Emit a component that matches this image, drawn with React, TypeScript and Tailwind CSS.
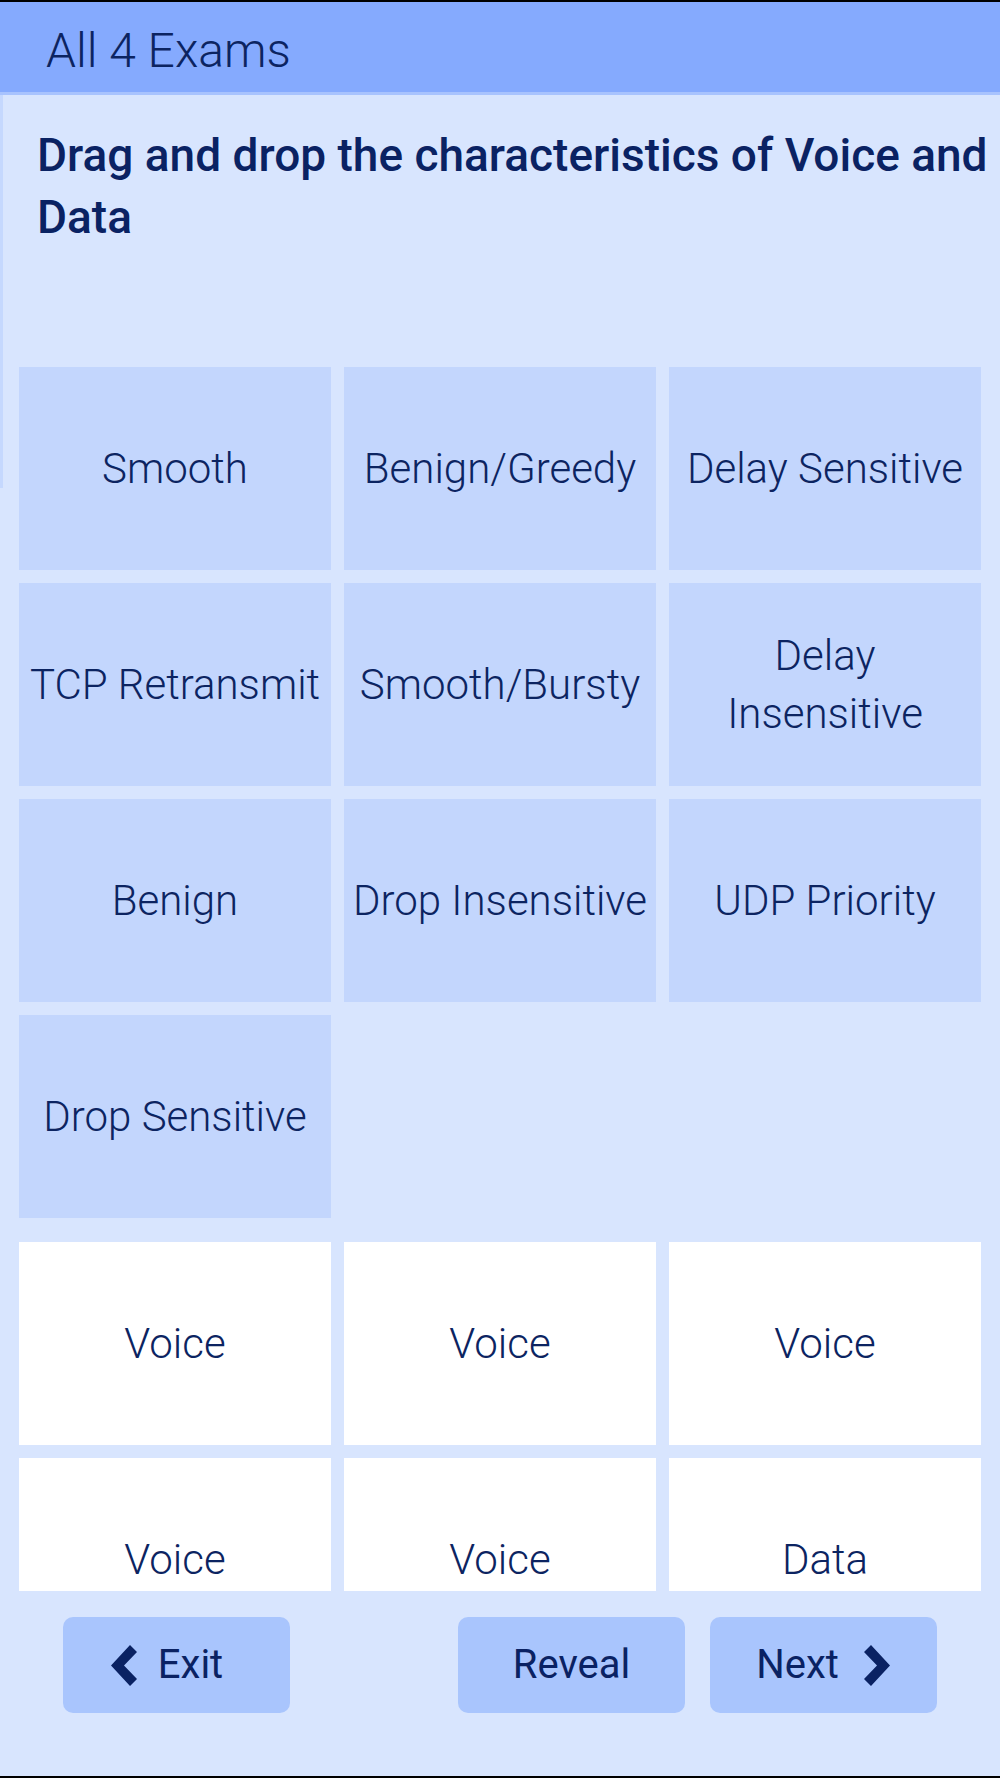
const choices = [
  "Smooth",
  "Benign/Greedy",
  "Delay Sensitive",
  "TCP Retransmit",
  "Smooth/Bursty",
  "Delay Insensitive",
  "Benign",
  "Drop Insensitive",
  "UDP Priority",
  "Drop Sensitive",
];

const answers = ["Voice", "Voice", "Voice", "Voice", "Voice", "Data"];

function Chevron({ dir }: { dir: "left" | "right" }) {
  return (
    <svg viewBox="0 0 28 41" className="w-[28px] h-[41px]" fill="currentColor">
      {dir === "left" ? (
        <polygon points="20,0 27,7 14,20.5 27,34 20,41 1,20.5" />
      ) : (
        <polygon points="8,0 1,7 14,20.5 1,34 8,41 27,20.5" />
      )}
    </svg>
  );
}

export default function App() {
  return (
    <div className="w-[1000px] h-[1778px] flex flex-col bg-[#d8e5fe] border-y-2 border-black font-['Roboto',sans-serif] text-[#0c2461] overflow-hidden">
      {/* HEADER */}
      <header className="h-[93px] shrink-0 bg-[#85aafe] border-b-[3px] border-[#a8c3fe] flex items-center px-[46px]">
        <h1 className="text-[48px] font-light leading-none pt-[8px]">All 4 Exams</h1>
      </header>

      {/* SCROLL AREA */}
      <main className="relative flex-1 overflow-hidden">
        <div className="absolute left-0 top-0 w-[3px] h-[393px] bg-[#c5d8fe]" />

        <p className="pt-[29px] pl-[37px] pr-[8px] text-[46px] font-medium leading-[62px] text-[#0a2263]">
          Drag and drop the characteristics of Voice and Data
        </p>

        <div className="mt-[119px] px-[19px] grid grid-cols-3 gap-[13px]">
          {choices.map((c) => (
            <div
              key={c}
              className="h-[203px] bg-[#c3d6fd] flex items-center justify-center text-center px-[3px] text-[42px] font-light leading-[58px]"
            >
              {c}
            </div>
          ))}
        </div>

        <div className="mt-[24px] px-[19px] grid grid-cols-3 gap-[13px]">
          {answers.map((a, i) => (
            <div
              key={i}
              className="h-[203px] bg-white flex items-center justify-center text-center text-[42px] font-light"
            >
              {a}
            </div>
          ))}
        </div>
      </main>

      {/* FOOTER */}
      <footer className="h-[185px] shrink-0 flex items-start justify-between px-[63px] pt-[26px]">
        <button className="w-[227px] h-[96px] rounded-[10px] bg-[#a9c5fd] flex items-center justify-center gap-5 pr-5 text-[40px] text-[#0a2263]">
          <Chevron dir="left" />
          Exit
        </button>
        <div className="flex gap-[25px]">
          <button className="w-[227px] h-[96px] rounded-[10px] bg-[#a9c5fd] flex items-center justify-center text-[40px] text-[#0a2263]">
            Reveal
          </button>
          <button className="w-[227px] h-[96px] rounded-[10px] bg-[#a9c5fd] flex items-center justify-center gap-6 text-[40px] text-[#0a2263]">
            Next
            <Chevron dir="right" />
          </button>
        </div>
      </footer>
    </div>
  );
}
